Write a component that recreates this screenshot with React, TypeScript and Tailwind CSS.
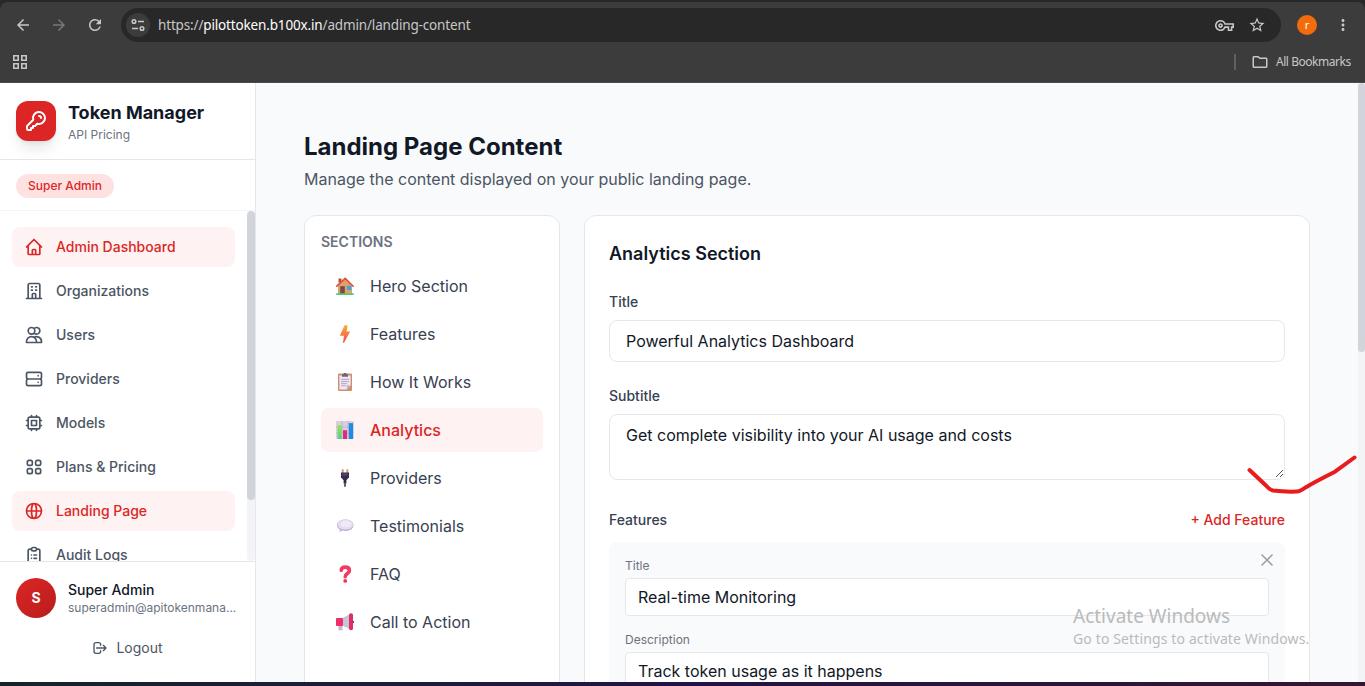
import type { ReactNode } from "react";
import {
  HiOutlineChip,
  HiOutlineClipboardList,
  HiOutlineGlobeAlt,
  HiOutlineHome,
  HiOutlineKey,
  HiOutlineLogout,
  HiOutlineOfficeBuilding,
  HiOutlineServer,
  HiOutlineUsers,
  HiOutlineViewGrid,
  HiOutlineX,
} from "react-icons/hi";
import {
  MdArrowBack,
  MdArrowForward,
  MdMoreVert,
  MdOutlineFolder,
  MdOutlineStarBorder,
  MdOutlineVpnKey,
  MdRefresh,
} from "react-icons/md";

const navItems = [
  { name: "Admin Dashboard", icon: HiOutlineHome, active: true },
  { name: "Organizations", icon: HiOutlineOfficeBuilding },
  { name: "Users", icon: HiOutlineUsers },
  { name: "Providers", icon: HiOutlineServer },
  { name: "Models", icon: HiOutlineChip },
  { name: "Plans & Pricing", icon: HiOutlineViewGrid },
  { name: "Landing Page", icon: HiOutlineGlobeAlt, active: true },
  { name: "Audit Logs", icon: HiOutlineClipboardList },
];

function Emoji({ children }: { children: ReactNode }) {
  return (
    <svg viewBox="0 0 18 18" className="h-[18px] w-[18px]" fill="none">
      {children}
    </svg>
  );
}

const sections = [
  {
    name: "Hero Section",
    icon: (
      <Emoji>
        <path d="M2.5 1.5h3v4h-3z" fill="#a5573a" />
        <path d="M2 8.5 9.3 2l6.7 6.5V17H2z" fill="#dba36c" />
        <path d="M.8 9.2 9.2 1.4l8 7.8" stroke="#e5483a" strokeWidth="1.6" strokeLinecap="round" />
        <path d="M4.2 9.2h4.6V17H4.2z" fill="#7d4a42" />
        <path d="M11 8.800h4.200v4.200H11z" fill="#3aa5e8" />
        <rect x="0" y="16.2" width="18" height="1.8" rx=".9" fill="#4fcb7c" />
      </Emoji>
    ),
  },
  {
    name: "Features",
    icon: (
      <Emoji>
        <defs>
          <linearGradient id="bolt" x1="9" y1="0" x2="9" y2="18" gradientUnits="userSpaceOnUse">
            <stop stopColor="#ffad3b" />
            <stop offset="1" stopColor="#f24a45" />
          </linearGradient>
        </defs>
        <path d="M8.500.3h3.100L10.600 6.600h3.600L8 17.700H6.900l1.200-6.900H3.900z" fill="url(#bolt)" />
      </Emoji>
    ),
  },
  {
    name: "How It Works",
    icon: (
      <Emoji>
        <rect x="2" y=".5" width="14" height="17.5" rx="1" fill="#cf8e6d" />
        <path d="M3.4 2.4h11.2v9.8l-3.8 4.2H3.4z" fill="#eee8f5" />
        <path d="M14.6 12.2h-3.8v4.2z" fill="#b9b1ce" />
        <path d="M6 1.2h1.5a1.5 1.5 0 0 1 3 0H12v2.6H6z" fill="#6c6674" />
        <path d="M5 6.4h8M5 8.6h8M5 10.7h6M5 12.8h5" stroke="#a79fbb" strokeWidth=".9" />
      </Emoji>
    ),
  },
  {
    name: "Analytics",
    active: true,
    icon: (
      <Emoji>
        <defs>
          <linearGradient id="bar" x1="0" y1="4" x2="0" y2="18" gradientUnits="userSpaceOnUse">
            <stop stopColor="#9be34e" />
            <stop offset="1" stopColor="#4fd08e" />
          </linearGradient>
        </defs>
        <rect width="18" height="18" rx="1" fill="#d8d0df" />
        <path d="M0 6h18M0 12h18M6 0v18M12 0v18" stroke="#b8adc5" strokeWidth=".7" />
        <path d="M1.6 4.2h4.200V18H1.600z" fill="url(#bar)" />
        <path d="M7 9.2h4V18H7z" fill="#e5277f" />
        <path d="M12.8 2.1h4.200V18h-4.200z" fill="#1f8be5" />
      </Emoji>
    ),
  },
  {
    name: "Providers",
    icon: (
      <Emoji>
        <path d="M6.7.3v4M11.3.3v4" stroke="#d39b62" strokeWidth="1.900" />
        <path d="M5 3.4h8v4.8L10.7 11H7.3L5 8.2z" fill="#372c4c" />
        <path d="M6.2 4.5h5.5v2H6.2z" fill="#56418a" />
        <path d="M9 10.5v4" stroke="#302a3e" strokeWidth="2.8" />
        <path d="M9 14.2v3.5" stroke="#504a61" strokeWidth="1.8" />
      </Emoji>
    ),
  },
  {
    name: "Testimonials",
    icon: (
      <Emoji>
        <path d="M9.3 2.5c4.8 0 8.2 2.3 8.2 5.7s-3.4 5.8-8.2 5.8c-1.2 0-2.2-.1-3.2-.4L3.5 15l.3-2.5C2 11.5 1 10 1 8.2c0-3.4 3.5-5.700 8.300-5.700z" fill="#c0b0da" />
        <ellipse cx="9.3" cy="7.7" rx="7.700" ry="4.900" fill="#e5dcf2" />
        <ellipse cx="10" cy="7" rx="5.5" ry="3.2" fill="#f0eaf8" />
      </Emoji>
    ),
  },
  {
    name: "FAQ",
    icon: (
      <Emoji>
        <path
          d="M5.2 5.200C5.400 3.200 7 2.100 9.200 2.100c2.500 0 4.200 1.200 4.200 3.300 0 3.300-4.200 2.900-4.200 6.300"
          stroke="#f13c61"
          strokeWidth="3.600"
          strokeLinecap="round"
        />
        <circle cx="9.2" cy="15.9" r="1.900" fill="#ef3458" />
      </Emoji>
    ),
  },
  {
    name: "Call to Action",
    icon: (
      <Emoji>
        <path d="M2.5 11.5h4v5.8h-4z" fill="#c1b7d2" />
        <path d="M6 5.2 14 1v15l-8-3.5z" fill="#c9c3d7" />
        <rect y="5" width="7" height="8" rx=".8" fill="#ee2f68" />
        <circle cx="16.9" cy="9" r="1.2" fill="#48304f" />
        <rect x="13" y=".2" width="4" height="17" rx="1.8" fill="#dd2e68" />
      </Emoji>
    ),
  },
];

function BrowserBar() {
  return (
    <header className="h-[83px] shrink-0 bg-[#282828] pt-0.5 font-['Noto_Sans',sans-serif] text-[#c7c7c7]">
      <div className="h-[81px] rounded-t-lg border-b border-[#4a4a4a] bg-[#3c3c3c]">
        <div className="flex h-[46px] items-center">
          <div className="flex w-[121px] items-center gap-[18px] pl-3.5">
            <MdArrowBack size={18} />
            <MdArrowForward size={18} className="text-[#777]" />
            <MdRefresh size={18} />
          </div>
          <div className="flex h-[34px] w-[1160px] items-center rounded-full bg-[#282828] pr-[15px] pl-[5px]">
            <div className="flex h-6 w-6 items-center justify-center rounded-full bg-[#3c3c3c]">
              <svg viewBox="0 0 14 14" className="h-3.5 w-3.5" fill="none" stroke="currentColor" strokeWidth="1.5">
                <circle cx="3" cy="3.5" r="1.8" />
                <path d="M7 3.5h6M1 10.5h6" />
                <circle cx="11" cy="10.5" r="1.8" />
              </svg>
            </div>
            <span className="ml-2 text-[13.5px] leading-5 tracking-[-0.155px]">
              https://<span className="text-white">pilottoken.b100x.in</span>/admin/landing-content
            </span>
            <div className="ml-auto flex items-center gap-3.5">
              <MdOutlineVpnKey size={19} />
              <MdOutlineStarBorder size={18} />
            </div>
          </div>
          <div className="ml-4 flex h-5 w-5 items-center justify-center rounded-full bg-[#f26c0c] text-[11px] text-white">
            r
          </div>
          <MdMoreVert size={18} className="ml-[17px]" />
        </div>
        <div className="flex h-7 items-center pr-3.5">
          <svg viewBox="0 0 14 14" className="ml-[13px] h-3.5 w-3.5" fill="none" stroke="currentColor" strokeWidth="1.6">
            <path d="M.8.8h4.4v4.4H.8zM8.8.8h4.4v4.4H8.8zM.8 8.8h4.4v4.4H.8zM8.8 8.8h4.4v4.4H8.8z" />
          </svg>
          <div className="ml-auto h-4 w-0.5 bg-[#606060]" />
          <MdOutlineFolder size={18} className="ml-[15px]" />
          <span className="ml-[7px] w-[75px] text-[12px] tracking-[-0.46px] whitespace-nowrap">All Bookmarks</span>
        </div>
      </div>
    </header>
  );
}

function Sidebar() {
  return (
    <aside className="flex w-64 shrink-0 flex-col border-r border-[#e5e7eb] bg-white">
      <div className="flex items-center gap-3 border-b border-[#e5e7eb] p-4">
        <div className="flex h-10 w-10 items-center justify-center rounded-xl bg-[#dc2626] text-white shadow-lg">
          <HiOutlineKey size={24} />
        </div>
        <div>
          <h1 className="text-lg leading-7 font-bold text-[#111827]">Token Manager</h1>
          <p className="text-xs text-[#6b7280]">API Pricing</p>
        </div>
      </div>
      <div className="flex border-b border-[#f3f4f6] px-4 pt-3.5 pb-3">
        <span className="rounded-full bg-[#fee2e2] px-3 py-1 text-xs font-medium text-[#dc2626]">
          Super Admin
        </span>
      </div>

      <div className="flex min-h-0 flex-1">
        <nav className="flex-1 space-y-1 overflow-hidden px-3 py-4">
          {navItems.map(({ name, icon: Icon, active }) => (
            <a
              key={name}
              className={`flex h-10 items-center gap-3 rounded-lg px-3 text-sm font-medium ${
                active ? "bg-[#fef2f2] text-[#dc2626]" : "text-[#4b5563]"
              }`}
            >
              <Icon size={20} />
              {name}
            </a>
          ))}
        </nav>
        <div className="w-2 rounded-full bg-[#f3f4f6]">
          <div className="h-[289px] rounded-full bg-[#d1d5db]" />
        </div>
      </div>

      <div className="h-[121px] border-t border-[#e5e7eb] p-4">
        <div className="flex items-center gap-3">
          <div className="flex h-10 w-10 shrink-0 items-center justify-center rounded-full bg-linear-to-br from-[#dc2626] to-[#b91c1c] text-sm font-bold text-white">
            S
          </div>
          <div className="min-w-0 flex-1">
            <p className="text-sm font-medium text-[#111827]">Super Admin</p>
            <p className="truncate text-xs text-[#6b7280]">superadmin@apitokenmana...</p>
          </div>
        </div>
        <button className="mt-3 flex w-full items-center justify-center gap-2 py-2 text-sm text-[#4b5563]">
          <HiOutlineLogout size={16} />
          Logout
        </button>
      </div>
    </aside>
  );
}

function SectionList() {
  return (
    <div className="w-64 shrink-0 rounded-xl border border-[#e5e7eb] bg-white p-4">
      <h3 className="mb-3 text-sm font-semibold text-[#6b7280]">SECTIONS</h3>
      <div className="space-y-1">
        {sections.map((section) => (
          <button
            key={section.name}
            className={`flex h-11 w-full items-center gap-3 rounded-lg px-3 text-base ${
              section.active ? "bg-[#fef2f2] font-medium text-[#dc2626]" : "text-[#374151]"
            }`}
          >
            <span className="w-[25px] pl-[3px]">{section.icon}</span>
            {section.name}
          </button>
        ))}
      </div>
    </div>
  );
}

function AnalyticsForm() {
  return (
    <div className="min-w-0 flex-1 rounded-xl border border-[#e5e7eb] bg-white p-6">
      <h2 className="mb-6 text-lg leading-7 font-semibold text-[#111827]">Analytics Section</h2>
      <label className="mb-2 block text-sm font-medium text-[#374151]">Title</label>
      <div className="h-[42px] rounded-lg border border-[#e5e7eb] px-4 py-2 text-base text-[#111827]">
        Powerful Analytics Dashboard
      </div>
      <label className="mt-6 mb-2 block text-sm font-medium text-[#374151]">Subtitle</label>
      <div className="flex h-[66px] justify-between rounded-lg border border-[#e5e7eb] py-2 pl-4 text-base text-[#111827]">
        Get complete visibility into your AI usage and costs
        <svg viewBox="0 0 9 9" className="-mb-[7px] h-[9px] w-[9px] self-end" stroke="#555" fill="none">
          <path d="M1 8 8 1M5 8l3-3" />
        </svg>
      </div>

      <div className="mt-[30px] mb-3 flex items-center justify-between text-sm font-medium">
        <span className="text-[#374151]">Features</span>
        <button className="text-[#dc2626]">+ Add Feature</button>
      </div>
      <div className="relative h-[250px] rounded-lg bg-[#f9fafb] p-4">
        <HiOutlineX size={20} className="absolute top-2 right-2 text-[#9ca3af]" />
        <label className="mb-1 block text-xs text-[#6b7280]">Title</label>
        <div className="mb-4 h-[38px] rounded border border-[#e5e7eb] bg-white px-3 py-1.5 text-base text-[#111827]">
          Real-time Monitoring
        </div>
        <label className="mb-1 block text-xs text-[#6b7280]">Description</label>
        <div className="h-16 rounded border border-[#e5e7eb] bg-white px-3 py-1.5 text-base text-[#111827]">
          Track token usage as it happens
        </div>
      </div>
    </div>
  );
}

export default function App() {
  return (
    <div className="relative flex h-[686px] w-[1365px] flex-col overflow-hidden font-['Inter',sans-serif]">
      <BrowserBar />
      <div className="flex min-h-0 flex-1">
        <Sidebar />
        <main className="min-w-0 flex-1 overflow-hidden bg-[#f9fafb] p-12">
          <h1 className="text-2xl leading-8 font-bold text-[#111827]">Landing Page Content</h1>
          <p className="mt-1 mb-6 text-base text-[#4b5563]">
            Manage the content displayed on your public landing page.
          </p>
          <div className="flex gap-6">
            <SectionList />
            <AnalyticsForm />
          </div>
        </main>
        <div className="w-[7px] shrink-0 bg-[#f3f4f6]">
          <div className="h-[269px] rounded-full bg-[#d1d5db]" />
        </div>
      </div>
      <div className="h-1 shrink-0 bg-linear-to-r from-[#15252c] via-[#211348] to-[#351532]" />

      <div className="absolute top-[604px] left-[1073px] font-['Noto_Sans',sans-serif] whitespace-nowrap text-[#b9babb]">
        <p className="text-[19px] leading-6">Activate Windows</p>
        <p className="pt-px text-[14px] leading-5 tracking-[0.13px]">Go to Settings to activate Windows.</p>
      </div>
      <svg
        viewBox="0 0 112 42"
        className="absolute top-[454px] left-[1246px] h-[42px] w-[112px]"
        fill="none"
        stroke="#e81b1d"
        strokeWidth="4"
        strokeLinecap="round"
        strokeLinejoin="round"
      >
        <path d="M3.5 16 20 31.5q4 4.500 7 5 12 1.500 24 1 3 0 9-4.300 9-5.500 29-15.500L108.500 3.500" />
      </svg>
    </div>
  );
}
